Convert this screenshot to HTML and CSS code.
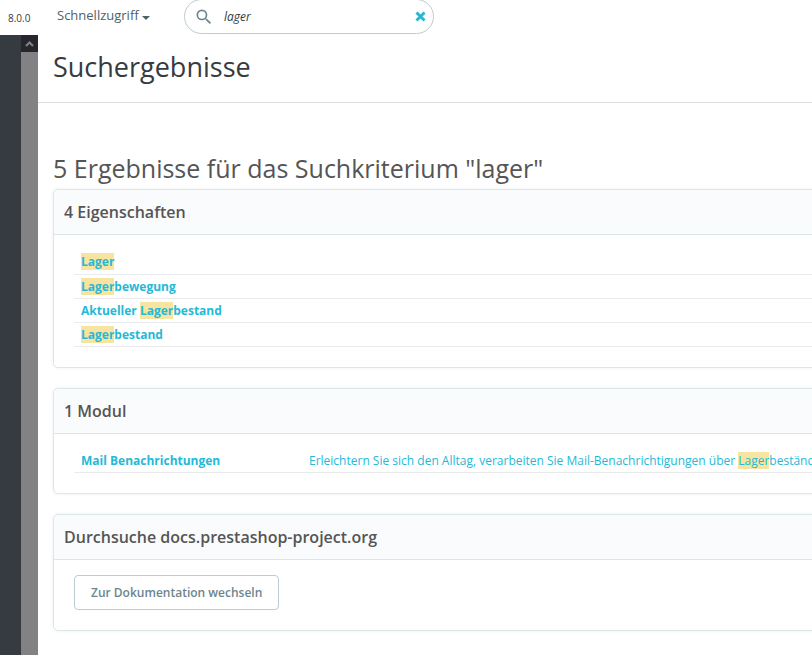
FILE: index.html
```html
<!DOCTYPE html>
<html lang="de">
<head>
    <meta charset="UTF-8">
    <meta name="viewport" content="width=device-width, initial-scale=1.0">
    <title>Suchergebnisse</title>
    <link rel="stylesheet" href="styles.css">
</head>
<body>
    <header class="header">
        <span class="version">8.0.0</span>
        <button type="button" class="quick-access">Schnellzugriff <span class="caret"></span></button>
        <form class="search" role="search">
            <svg class="search-icon" viewBox="0 0 24 24" aria-hidden="true"><path d="M15.5 14h-.79l-.28-.27A6.47 6.47 0 0 0 16 9.500 6.500 6.500 0 1 0 9.500 16c1.610 0 3.090-.59 4.230-1.570l.27.28v.79l5 4.990L20.490 19l-4.990-5zm-6 0a4.500 4.500 0 1 1 0-9 4.500 4.500 0 0 1 0 9z"/></svg>
            <input type="text" class="search-input" value="lager" aria-label="Suche">
            <button type="reset" class="search-clear" aria-label="Suche leeren">
                <svg viewBox="0 0 11 11" aria-hidden="true"><path d="M1.500 1.500l8 8M9.500 1.500l-8 8"/></svg>
            </button>
        </form>
    </header>
    <div class="page">
        <nav class="sidebar" aria-label="Menü">
            <div class="scrollbar">
                <div class="scroll-up">
                    <svg viewBox="0 0 9 6" aria-hidden="true"><path d="M1 5l3.500-3.500L8 5"/></svg>
                </div>
            </div>
        </nav>
        <main class="main">
            <div class="page-head">
                <h1>Suchergebnisse</h1>
            </div>
            <div class="content">
                <h2>5 Ergebnisse für das Suchkriterium "lager"</h2>
                <section class="panel">
                    <h3>4 Eigenschaften</h3>
                    <div class="panel-body">
                        <table>
                            <tbody>
                                <tr><td><a href="#"><mark>Lager</mark></a></td></tr>
                                <tr><td><a href="#"><mark>Lager</mark>bewegung</a></td></tr>
                                <tr><td><a href="#">Aktueller <mark>Lager</mark>bestand</a></td></tr>
                                <tr><td><a href="#"><mark>Lager</mark>bestand</a></td></tr>
                            </tbody>
                        </table>
                    </div>
                </section>
                <section class="panel">
                    <h3>1 Modul</h3>
                    <div class="panel-body">
                        <table>
                            <tbody>
                                <tr>
                                    <td class="module-name"><a href="#">Mail Benachrichtungen</a></td>
                                    <td class="module-text"><a href="#">Erleichtern Sie sich den Alltag, verarbeiten Sie Mail-Benachrichtigungen über <mark>Lager</mark>bestände</a></td>
                                </tr>
                            </tbody>
                        </table>
                    </div>
                </section>
                <section class="panel">
                    <h3>Durchsuche docs.prestashop-project.org</h3>
                    <div class="panel-body">
                        <a href="#" class="btn">Zur Dokumentation wechseln</a>
                    </div>
                </section>
            </div>
        </main>
    </div>
</body>
</html>
```
FILE: styles.css
```css
* {
    box-sizing: border-box;
}
body {
    margin: 0;
    min-height: 100vh;
    display: flex;
    flex-direction: column;
    font-family: "Open Sans", "Liberation Sans", sans-serif;
    font-size: 12px;
    color: #363a41;
    background: #fff;
    overflow: hidden;
}
h1, h2, h3 {
    margin: 0;
    font-weight: 400;
}
a {
    color: #25b9d7;
    text-decoration: none;
}
button {
    padding: 0;
    border: none;
    background: none;
    font-family: inherit;
    cursor: pointer;
}
.header {
    display: flex;
    align-items: center;
    height: 35px;
}
.version {
    width: 57px;
    padding-left: 8px;
    font-size: 10px;
}
.quick-access {
    width: 127px;
    padding-bottom: 6px;
    font-size: 13px;
    line-height: 18px;
    text-align: left;
    color: #4e6167;
}
.caret {
    display: inline-block;
    border: 4px solid transparent;
    border-top-color: #4e6167;
    border-bottom: none;
    vertical-align: 0;
}
.search {
    display: flex;
    align-items: center;
    width: 250px;
    height: 35px;
    margin-top: -2px;
    padding: 0 7px 0 9px;
    border: 1px solid #bbcdd2;
    border-radius: 18px;
}
.search-icon {
    width: 20px;
    height: 20px;
    fill: #6c868e;
}
.search-input {
    flex: 1;
    min-width: 0;
    padding: 0 10px;
    border: none;
    outline: none;
    background: none;
    font: italic 12px "Open Sans", sans-serif;
    color: #363a41;
}
.search-clear svg {
    display: block;
    width: 11px;
    height: 11px;
    fill: none;
    stroke: #25b9d7;
    stroke-width: 3;
}
.page {
    flex: 1;
    display: flex;
}
.sidebar {
    display: flex;
    justify-content: flex-end;
    width: 38px;
    background: #363a41;
}
.scrollbar {
    width: 17px;
    background: #828285;
}
.scroll-up {
    display: flex;
    align-items: center;
    justify-content: center;
    height: 17px;
    background: #25272c;
}
.scroll-up svg {
    width: 9px;
    height: 6px;
    fill: none;
    stroke: #828285;
    stroke-width: 2;
}
.main {
    flex: 1;
    min-width: 0;
}
.page-head {
    padding: 12px 15px 16px;
    border-bottom: 1px solid #dddddd;
}
h1 {
    font-size: 27px;
    line-height: 39px;
}
/* the result panels run on past the right edge */
.content {
    width: calc(100% + 40px);
    padding: 48px 15px 0;
    color: #555;
}
h2 {
    padding-bottom: 4px;
    font-size: 25px;
    line-height: 34px;
}
.panel {
    margin-bottom: 20px;
    border: 1px solid #dbe6e9;
    border-radius: 5px;
    box-shadow: 0 0 4px rgba(0, 0, 0, 0.06);
}
h3 {
    padding: 0 10px;
    border-bottom: 1px solid #dbe6e9;
    border-radius: 5px 5px 0 0;
    background: #fafbfc;
    font-size: 16px;
    font-weight: 600;
    line-height: 44px;
}
.panel-body {
    padding: 15px 20px 20px;
}
table {
    width: 100%;
    border-collapse: collapse;
    line-height: 17px;
    white-space: nowrap;
}
td {
    height: 24px;
    padding: 3px 7px;
    border-bottom: 1px solid #eaebec;
    font-weight: 700;
}
td.module-name {
    width: 228px;
}
td.module-text {
    max-width: 0;
    font-weight: 400;
}
mark {
    background: #f7e4a0;
    color: inherit;
}
.btn {
    display: inline-block;
    padding: 0 16px;
    border: 1px solid #bbcdd2;
    border-radius: 4px;
    font-weight: 600;
    line-height: 33px;
    color: #6c868e;
}
```
